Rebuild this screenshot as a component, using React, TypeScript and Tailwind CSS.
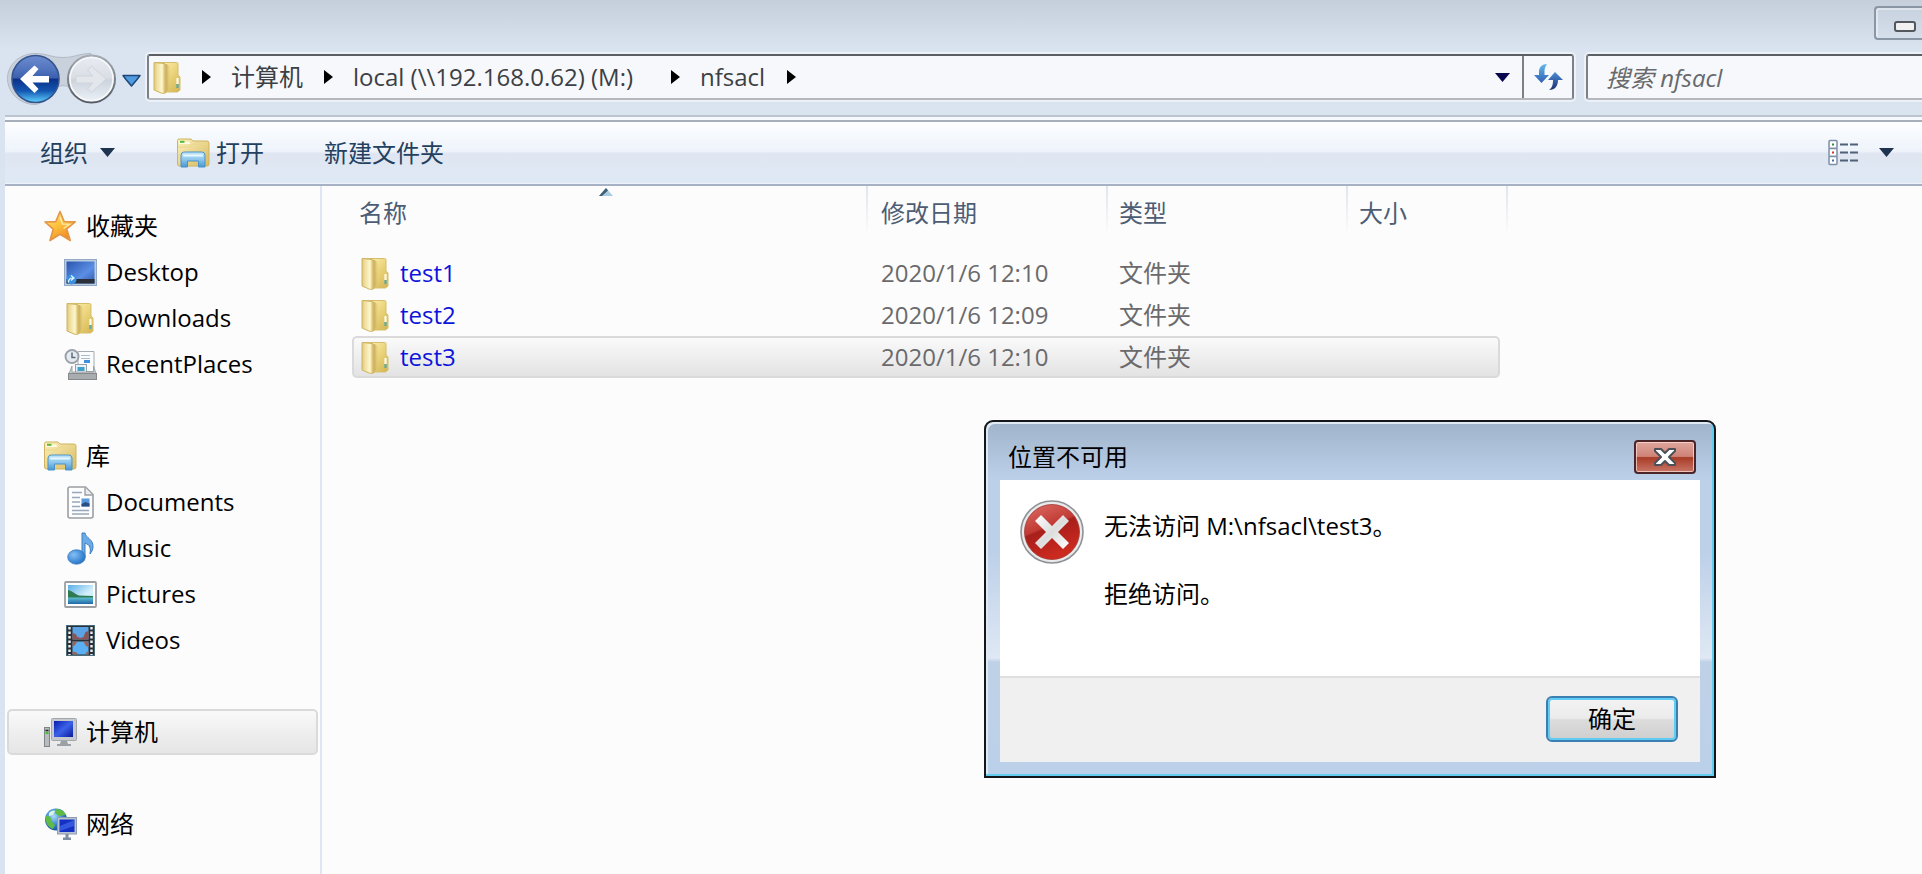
import React from "react";

type IconProps = { className?: string };

function FolderIcon({ className = "" }: IconProps) {
  return (
    <svg width="28" height="33" viewBox="0 0 28 33" className={`shrink-0 ${className}`} aria-hidden="true">
      <defs>
        <linearGradient id="fBack" x1="0" y1="0" x2="1" y2="1">
          <stop offset="0" stopColor="#fdf5c0" />
          <stop offset="0.450" stopColor="#efd985" />
          <stop offset="1" stopColor="#d3b550" />
        </linearGradient>
        <linearGradient id="fFront" x1="0" y1="0" x2="1" y2="0">
          <stop offset="0" stopColor="#e0c878" />
          <stop offset="0.250" stopColor="#f0dfa0" />
          <stop offset="0.650" stopColor="#fdf7cf" />
          <stop offset="0.800" stopColor="#e2cb80" />
          <stop offset="1" stopColor="#c9ab50" />
        </linearGradient>
        <linearGradient id="fShade" x1="0" y1="0" x2="1" y2="0">
          <stop offset="0" stopColor="#b3923c" />
          <stop offset="1" stopColor="#e3cb79" stopOpacity="0.200" />
        </linearGradient>
      </defs>
      <path d="M2 1.500h21.500a1.500 1.500 0 0 1 1.500 1.500v11l2 2v13l-2.500 2H11V2z" fill="url(#fBack)" stroke="#d6bd69" strokeWidth="1" />
      <path d="M12 3c3 0 5 2 5 4v20l-5 5z" fill="url(#fShade)" />
      <path d="M1 1.500l10 1c2 .5 2.500 2 2.500 4V31c-2 2-4 1.500-5.500 1L1 29z" fill="url(#fFront)" stroke="#ceb565" strokeWidth="1" />
      <path d="M24.500 17v6" stroke="#fffbe8" strokeWidth="2.200" />
      <path d="M24.500 23v4" stroke="#5aaaa8" strokeWidth="2.200" />
    </svg>
  );
}

function LibraryIcon({ className = "" }: IconProps) {
  return (
    <svg width="34" height="30" viewBox="0 0 34 30" className={`shrink-0 ${className}`} aria-hidden="true">
      <defs>
        <linearGradient id="lFold" x1="0" y1="0" x2="1" y2="1">
          <stop offset="0" stopColor="#fbf0bb" />
          <stop offset="1" stopColor="#d9bb60" />
        </linearGradient>
        <linearGradient id="lStand" x1="0" y1="0" x2="0" y2="1">
          <stop offset="0" stopColor="#c3e6f8" />
          <stop offset="0.5" stopColor="#8cc6ec" />
          <stop offset="1" stopColor="#4796cf" />
        </linearGradient>
      </defs>
      <path d="M1.500 5V2.500a1.500 1.500 0 0 1 1.500-1.500h12l2 2h14a2 2 0 0 1 2 2v21a2 2 0 0 1-2 2H3.500a2 2 0 0 1-2-2z" fill="url(#lFold)" stroke="#d0b45e" />
      <path d="M3 3.500h10l1.500 2.500H3z" fill="#fffbe2" />
      <path d="M4 2.800h4.500v2H4z" fill="#56b932" />
      <path d="M2 9h11l4-3h15" stroke="#e9d68d" fill="none" />
      <path d="M5 29V18c0-3 1-4 4-4h16c3 0 4 1 4 4v11h-6.500v-6h-11v6z" fill="url(#lStand)" stroke="#4a93c8" strokeWidth="1" strokeLinejoin="round" />
      <path d="M8 17.500h18" stroke="#e8f7ff" strokeWidth="2" strokeLinecap="round" />
    </svg>
  );
}

function StarIcon() {
  return (
    <svg width="33" height="32" viewBox="0 0 33 32" className="shrink-0" aria-hidden="true">
      <defs>
        <linearGradient id="star" x1="0" y1="0" x2="0.600" y2="1">
          <stop offset="0" stopColor="#ffe98c" />
          <stop offset="0.55" stopColor="#fdc03c" />
          <stop offset="1" stopColor="#f08a24" />
        </linearGradient>
      </defs>
      <path d="M16 1.500l4.200 10 11 .3-8.500 7.200 3.600 11.500L16 24.300 6 30.500l3.200-11.300L1 12l10.800-.4z" fill="url(#star)" stroke="#e39548" strokeWidth="1.600" strokeLinejoin="round" />
      <path d="M16 7l2.500 7 7 .3-6 4" stroke="#fff2b8" strokeWidth="1.500" fill="none" opacity=".8" />
    </svg>
  );
}

function DesktopIcon() {
  return (
    <svg width="33" height="27" viewBox="0 0 33 27" className="shrink-0" aria-hidden="true">
      <defs>
        <linearGradient id="desk" x1="0" y1="0" x2="1" y2="1">
          <stop offset="0" stopColor="#2c55ad" />
          <stop offset="0.600" stopColor="#5b8ee6" />
          <stop offset="1" stopColor="#3059a8" />
        </linearGradient>
      </defs>
      <rect x="0.500" y="0.500" width="32" height="26" fill="#b9cde2" stroke="#93a9c4" />
      <rect x="2.500" y="2.500" width="28" height="22" fill="url(#desk)" />
      <rect x="2.500" y="20" width="28" height="4.500" fill="#2b3138" />
      <circle cx="7.500" cy="20.500" r="5" fill="#3a8fe0" />
      <path d="M4.500 23.500c0-3 2-4.500 4.500-4.500M7 16.500l3 2.500-3 2.500" stroke="#e6f4ff" strokeWidth="1.200" fill="none" />
    </svg>
  );
}

function RecentIcon() {
  return (
    <svg width="33" height="31" viewBox="0 0 33 31" className="shrink-0" aria-hidden="true">
      <path d="M14 2.500h16v20H14z" fill="#fbfcfd" stroke="#a6abb0" />
      <path d="M17 6.500h9M17 9.500h9" stroke="#a9bccb" strokeWidth="1.200" />
      <path d="M20 11h6v3h-6z" fill="#3e8fdc" />
      <rect x="11.500" y="15.500" width="11" height="8" fill="#e9f2f8" stroke="#98a0a8" />
      <rect x="13.500" y="18" width="7" height="4" fill="#3f9fc8" />
      <path d="M8 17l-3.500 9h28l-3-9v6H8z" fill="#c9ccd0" stroke="#94989c" strokeWidth=".8" />
      <rect x="4.500" y="24.500" width="28" height="6" fill="#a9acaf" stroke="#86898c" />
      <circle cx="8" cy="7.500" r="6.500" fill="#e6ebef" stroke="#9aa1a9" strokeWidth="2" />
      <path d="M8 3.500v5h3.500" stroke="#5a6b7d" strokeWidth="1.500" fill="none" />
    </svg>
  );
}

function DocumentIcon() {
  return (
    <svg width="27" height="33" viewBox="0 0 27 33" className="shrink-0" aria-hidden="true">
      <path d="M3 1h15.500L26 8.500V30a2 2 0 0 1-2 2H3a2 2 0 0 1-2-2V3a2 2 0 0 1 2-2z" fill="#fdfdfe" stroke="#9b9ea3" strokeWidth="1.600" />
      <path d="M18 1.500v7.500h7.500" fill="#e9ebee" stroke="#9b9ea3" strokeWidth="1.400" />
      <path d="M5 6.500h10M5 11.500h8M5 16h8M5 20.500h8M5 24.500h17M5 28h17" stroke="#97a9bc" strokeWidth="1.300" />
      <rect x="14.500" y="12.500" width="8" height="8" fill="#5a98dc" />
      <path d="M14.500 18l4-2 4 1.500v3h-8z" fill="#2a4f86" />
    </svg>
  );
}

function MusicIcon() {
  return (
    <svg width="27" height="33" viewBox="0 0 27 33" className="shrink-0" aria-hidden="true">
      <defs>
        <radialGradient id="note" cx="0.350" cy="0.350" r="0.800">
          <stop offset="0" stopColor="#86bff2" />
          <stop offset="0.600" stopColor="#3f8bd8" />
          <stop offset="1" stopColor="#1f64b4" />
        </radialGradient>
      </defs>
      <path d="M15 1h3c.5 5 8.500 6 8 14-.2 3-1.500 5-3 7 1-6 0-9-5-11v14h-3z" fill="#6aaae6" stroke="#3c7fc4" strokeWidth="1" />
      <ellipse cx="9.500" cy="25" rx="8.800" ry="7.200" fill="url(#note)" stroke="#3377bd" strokeWidth=".8" />
    </svg>
  );
}

function PictureIcon() {
  return (
    <svg width="33" height="27" viewBox="0 0 33 27" className="shrink-0" aria-hidden="true">
      <defs>
        <linearGradient id="sky" x1="0" y1="0" x2="1" y2="1">
          <stop offset="0" stopColor="#58aee8" />
          <stop offset="0.600" stopColor="#d3effa" />
        </linearGradient>
        <linearGradient id="lake" x1="0" y1="0" x2="0" y2="1">
          <stop offset="0" stopColor="#5fc0d0" />
          <stop offset="1" stopColor="#1f67a8" />
        </linearGradient>
      </defs>
      <rect x="1" y="1" width="31" height="25" rx="1" fill="#fdfdfd" stroke="#9b9fa3" strokeWidth="1.800" />
      <rect x="4" y="4" width="25" height="19" fill="url(#sky)" />
      <path d="M4 9c4 1 7 4 11 5.500l14 .5v2H4z" fill="#2f7a52" />
      <path d="M4 16.500h25V23H4z" fill="url(#lake)" />
    </svg>
  );
}

function VideoIcon() {
  return (
    <svg width="29" height="31" viewBox="0 0 29 31" className="shrink-0" aria-hidden="true">
      <rect x="0.500" y="0.500" width="28" height="30" fill="#2b3036" stroke="#4b6c74" />
      <path d="M3.500 2v28M25.500 2v28" stroke="#eef1f3" strokeWidth="2.400" strokeDasharray="2.500 2" />
      <rect x="6.500" y="2" width="16" height="12.500" fill="#5aa4e6" />
      <path d="M6.500 14.500V8l3 1 2 3 3 1 3-1 2-5 3-1v8.500z" fill="#8d5551" />
      <rect x="6.500" y="16.500" width="16" height="13" fill="#5ab0f2" />
      <path d="M6.500 16.500h5l-3 4-2 1zM22.500 16.500h-5l2 4 3 2zM6.500 29.500v-3l4 1 2 2zM22.500 29.500v-4l-4 4z" fill="#9a6258" />
    </svg>
  );
}

function ComputerIcon() {
  return (
    <svg width="33" height="29" viewBox="0 0 33 29" className="shrink-0" aria-hidden="true">
      <defs>
        <linearGradient id="screen" x1="0" y1="0" x2="1" y2="1">
          <stop offset="0" stopColor="#0a1cae" />
          <stop offset="0.500" stopColor="#3c62e8" />
          <stop offset="1" stopColor="#0a1a9c" />
        </linearGradient>
      </defs>
      <rect x="0.500" y="9.500" width="5" height="19" fill="#b9bcbf" stroke="#7f8488" />
      <path d="M1.500 12.500h3" stroke="#222" strokeWidth="1.500" />
      <path d="M1.500 15h3" stroke="#3ec62c" strokeWidth="2" />
      <rect x="7.500" y="0.500" width="25" height="22" rx="1" fill="#c6cacf" stroke="#a2a7ac" />
      <rect x="10" y="3" width="19" height="16" fill="url(#screen)" />
      <path d="M17 23h6l1 3h3v2H13v-2h3z" fill="#9ba0a5" />
    </svg>
  );
}

function NetworkIcon() {
  return (
    <svg width="33" height="33" viewBox="0 0 33 33" className="shrink-0" aria-hidden="true">
      <defs>
        <radialGradient id="globe" cx="0.400" cy="0.350" r="0.750">
          <stop offset="0" stopColor="#a8dcf7" />
          <stop offset="0.550" stopColor="#3380cc" />
          <stop offset="1" stopColor="#123f86" />
        </radialGradient>
      </defs>
      <circle cx="12" cy="11.500" r="11" fill="url(#globe)" />
      <path d="M2 8c4 0 6 2 5 5l4 4-2 4C4 19 1 15 2 8zM12 1c5 0 8 2 10 6l-7 1-4-3z" fill="#5fbb45" />
      <path d="M5 5c2-2 4-3 6-2l-2 4-4 1z" fill="#d8f4e4" />
      <rect x="13.500" y="9.500" width="19" height="16.500" fill="#b9c2d2" stroke="#8f9bb0" />
      <rect x="15.500" y="11.500" width="15" height="12.500" fill="#1530c4" />
      <path d="M16 18l14-6v6l-14 5z" fill="#4169e8" opacity=".7" />
      <path d="M21.500 26h3v3.500h2.500v2.500h-8v-2.500h2.500z" fill="#7d8ea3" />
    </svg>
  );
}

function NavButtons() {
  return (
    <div className="relative h-[45px] w-[147px] shrink-0">
      <svg width="147" height="60" viewBox="0 46 147 60" className="absolute -top-2 left-0" aria-hidden="true">
        <defs>
          <linearGradient id="backTop" x1="0" y1="0" x2="0" y2="1">
            <stop offset="0" stopColor="#6d8cd0" />
            <stop offset="0.300" stopColor="#5174be" />
            <stop offset="0.480" stopColor="#3b5fae" />
            <stop offset="0.500" stopColor="#0b3187" />
            <stop offset="0.750" stopColor="#1255b0" />
            <stop offset="1" stopColor="#5fd4ff" />
          </linearGradient>
          <linearGradient id="fwd" x1="0" y1="0" x2="0" y2="1">
            <stop offset="0" stopColor="#e9edf2" />
            <stop offset="0.480" stopColor="#d9dee5" />
            <stop offset="0.520" stopColor="#cbd3dd" />
            <stop offset="1" stopColor="#eef3f8" />
          </linearGradient>
          <linearGradient id="ring" x1="0" y1="0" x2="0" y2="1">
            <stop offset="0" stopColor="#a6abb2" />
            <stop offset="1" stopColor="#555b63" />
          </linearGradient>
        </defs>
        <path d="M35 53.500c12 0 16 4 28 4s16-4 28-4v48c-10 0-16-16-28-16s-16 19-28 19c-15 0-27.500-12-27.500-26S20 53.500 35 53.500z" fill="#c6cdd8" stroke="#a8b0bb" strokeWidth="1" opacity=".8" />
        <circle cx="35.500" cy="79" r="23.500" fill="url(#backTop)" stroke="#36558f" strokeWidth="1.600" />
        <path d="M20 79l14.500-13.500 4 3.500-6 7H49v6.500H32.500l6 6.500-4 4z" fill="#ffffff" />
        <circle cx="91.500" cy="79" r="23.500" fill="url(#fwd)" stroke="url(#ring)" strokeWidth="2" />
        <circle cx="91.500" cy="79" r="21.500" fill="none" stroke="#f7f9fb" strokeWidth="1.500" />
        <path d="M106 79L91.500 92.500l-4-3.500 5-6H76v-7h16.500l-5-6 4-4z" fill="#e3e6eb" stroke="#cfd5dc" strokeWidth="1" />
        <path d="M123 75.500h17l-3 4-5.500 6.500-5.500-6.500z" fill="#4f9de0" stroke="#1f4677" strokeWidth="1.500" strokeLinejoin="round" />
      </svg>
      <button type="button" aria-label="后退" className="absolute top-0 left-3 h-12 w-12 rounded-full" />
      <button type="button" aria-label="前进" className="absolute top-0 left-17 h-12 w-12 rounded-full" />
      <button type="button" aria-label="最近的页面" className="absolute top-3 left-30 h-6 w-5" />
    </div>
  );
}

function Chevron() {
  return (
    <svg width="9" height="14" viewBox="0 0 9 14" className="shrink-0" aria-hidden="true">
      <path d="M0 0l9 7-9 7z" fill="#000" />
    </svg>
  );
}

function DownTriangle({ className = "" }: IconProps) {
  return (
    <svg width="15" height="9" viewBox="0 0 15 9" className={`shrink-0 ${className}`} aria-hidden="true">
      <path d="M0 0h15L7.500 9z" fill="currentColor" />
    </svg>
  );
}

function AddressBar() {
  return (
    <div className="flex h-[46px] min-w-0 flex-1 items-stretch rounded-[3px] border-2 border-t-[#5c5f63] border-r-[#7d8186] border-b-[#b4b8be] border-l-[#7d8186] bg-[#f7f8fb] shadow-[0_0_0_2px_rgba(255,255,255,0.5)]">
      <nav aria-label="地址" className="flex min-w-0 flex-1 items-center pl-1 text-[#3c3f44]">
        <FolderIcon />
        <span className="ml-[21px] flex"><Chevron /></span>
        <a href="#computer" className="ml-5 w-[93px] whitespace-nowrap">计算机</a>
        <Chevron />
        <a href="#local" className="ml-5 w-[318px] whitespace-nowrap">local (\\192.168.0.62) (M:)</a>
        <Chevron />
        <a href="#nfsacl" className="ml-5 w-[87px] whitespace-nowrap">nfsacl</a>
        <Chevron />
      </nav>
      <button type="button" aria-label="以前的位置" className="flex w-[27px] items-center text-[#08084f]">
        <DownTriangle />
      </button>
      <button type="button" aria-label="刷新" className="flex w-[50px] items-center justify-center border-l-2 border-[#7d8186]">
        <svg width="30" height="28" viewBox="0 0 30 28" aria-hidden="true">
          <defs>
            <linearGradient id="rf" x1="0" y1="0" x2="0" y2="1">
              <stop offset="0" stopColor="#63b8ea" />
              <stop offset="1" stopColor="#2f5eb0" />
            </linearGradient>
            <linearGradient id="rf2" x1="0" y1="0" x2="0" y2="1">
              <stop offset="0" stopColor="#4a8fdc" />
              <stop offset="1" stopColor="#1d2f6e" />
            </linearGradient>
          </defs>
          <path d="M14 1c-5 0-8 3-8 8v3H1l7.500 8 7.500-8h-4.500V8c0-2 .5-4 2.500-7z" fill="url(#rf)" />
          <path d="M22 9l8 8h-5c0 6-3 10-9 10 3-2 4-5 4-10h-5z" fill="url(#rf2)" />
        </svg>
      </button>
    </div>
  );
}

function Toolbar() {
  return (
    <div className="flex h-[62px] items-center border-b border-[#eef2f9] bg-[linear-gradient(#fdfeff_0%,#eef3fb_48%,#dfe6f1_52%,#dfe9f6_100%)] pr-7 pl-[35px] text-[#24405f]">
      <button type="button" className="flex items-center gap-3">
        组织
        <DownTriangle className="text-[#1e3350]" />
      </button>
      <button type="button" className="ml-[61px] flex items-center gap-1.5">
        <LibraryIcon />
        打开
      </button>
      <button type="button" className="ml-[60px]">新建文件夹</button>
      <button type="button" aria-label="更改视图" className="ml-auto">
        <svg width="31" height="28" viewBox="0 0 31 28" aria-hidden="true">
          {[1, 9, 17].map((y) => (
            <rect key={y} x="1" y={y + 0.5} width="8" height="8" rx="1" fill="#fff" stroke="#7d8ea6" strokeWidth="1.500" />
          ))}
          <path d="M4 5.500h2" stroke="#3e8a3a" strokeWidth="2" />
          <path d="M4 13.500h2" stroke="#d8352a" strokeWidth="2" />
          <path d="M4 21.500h2" stroke="#3c6fb4" strokeWidth="2" />
          <path d="M12 5.500h8M22 5.500h8M12 13.500h8M22 13.500h8M12 21.500h8M22 21.500h8" stroke="#4f6178" strokeWidth="2" />
        </svg>
      </button>
      <button type="button" aria-label="更多选项" className="ml-5 flex text-[#1e3350]">
        <DownTriangle />
      </button>
    </div>
  );
}

type SideItem = { label: string; icon: React.ReactNode; child?: boolean; selected?: boolean };

const sideGroups: SideItem[][] = [
  [
    { label: "收藏夹", icon: <StarIcon /> },
    { label: "Desktop", icon: <DesktopIcon />, child: true },
    { label: "Downloads", icon: <FolderIcon />, child: true },
    { label: "RecentPlaces", icon: <RecentIcon />, child: true },
  ],
  [
    { label: "库", icon: <LibraryIcon /> },
    { label: "Documents", icon: <DocumentIcon />, child: true },
    { label: "Music", icon: <MusicIcon />, child: true },
    { label: "Pictures", icon: <PictureIcon />, child: true },
    { label: "Videos", icon: <VideoIcon />, child: true },
  ],
  [{ label: "计算机", icon: <ComputerIcon />, selected: true }],
  [{ label: "网络", icon: <NetworkIcon /> }],
];

function Sidebar() {
  return (
    <nav aria-label="导航窗格" className="flex w-[317px] shrink-0 flex-col gap-[46px] border-r-2 border-[#dfe5f2] pt-[17px] pr-0.5 pl-0.5 text-black">
      {sideGroups.map((group) => (
        <ul key={group[0].label}>
          {group.map((item) => (
            <li key={item.label}>
              <a
                href={`#${item.label}`}
                className={`flex h-[46px] items-center gap-[9px] rounded-[5px] border-2 ${item.child ? "pl-[54px]" : "pl-[34px]"} ${
                  item.selected ? "border-[#dadada] bg-[linear-gradient(#f9f9f9,#e5e5e5)]" : "border-transparent"
                }`}
              >
                <span className="flex w-[34px] shrink-0 justify-center">{item.icon}</span>
                {item.label}
              </a>
            </li>
          ))}
        </ul>
      ))}
    </nav>
  );
}

const files = [
  { name: "test1", date: "2020/1/6 12:10", type: "文件夹" },
  { name: "test2", date: "2020/1/6 12:09", type: "文件夹" },
  { name: "test3", date: "2020/1/6 12:10", type: "文件夹", selected: true },
];

function FileList() {
  const divider = "bg-[linear-gradient(#dfe4ee,#fcfcfc)] bg-[length:2px_50px] bg-right-top bg-no-repeat";
  const cell = "border-y-2 border-[#dadada] bg-[linear-gradient(#fafafb,#e3e3e4)]";
  return (
    <main className="min-w-0 flex-1 pl-[30px]">
      <table className="w-[1156px] table-fixed border-separate border-spacing-0 text-left">
        <colgroup>
          <col className="w-[516px]" />
          <col className="w-[240px]" />
          <col className="w-[240px]" />
          <col className="w-[152px]" />
          <col className="w-[8px]" />
        </colgroup>
        <thead>
          <tr className="h-[66px] align-top text-[#4c5d75]">
            <th className={`relative pt-[9px] pl-[7px] font-normal ${divider}`}>
              名称
              <svg width="14" height="8" viewBox="0 0 14 8" className="absolute top-0.5 left-[247px]" aria-hidden="true">
                <path d="M0 8l7-8 7 8z" fill="#a9cbe0" />
                <path d="M0 8l7-8 2 2.500L3 8z" fill="#3f5f78" />
              </svg>
            </th>
            <th className={`pt-[9px] pl-[13px] font-normal ${divider}`}>修改日期</th>
            <th className={`pt-[9px] pl-[11px] font-normal ${divider}`}>类型</th>
            <th colSpan={2} className={`pt-[9px] pl-[11px] font-normal ${divider}`}>大小</th>
          </tr>
        </thead>
        <tbody>
          {files.map((f) => {
            const base = f.selected ? cell : "border-y-2 border-transparent";
            return (
              <tr key={f.name} className="h-[42px] text-[#6a6a6c]">
                <td className={`p-0 ${base} ${f.selected ? "rounded-l-[5px] border-l-2" : "border-l-2"}`}>
                  <a href={`#${f.name}`} className="flex h-[38px] items-center gap-[11px] pl-[7px] text-[#0c14dc]">
                    <FolderIcon />
                    {f.name}
                  </a>
                </td>
                <td className={`p-0 pl-[13px] ${base}`}>{f.date}</td>
                <td className={`p-0 pl-[11px] ${base}`}>{f.type}</td>
                <td className={`p-0 ${base} ${f.selected ? "rounded-r-[5px] border-r-2" : ""}`} />
                <td className="p-0" />
              </tr>
            );
          })}
        </tbody>
      </table>
    </main>
  );
}

function ErrorDialog() {
  return (
    <div
      role="alertdialog"
      aria-labelledby="dialog-title"
      aria-describedby="dialog-text"
      className="absolute top-[420px] left-[984px] w-[732px] rounded-t-[9px] border-2 border-[#15181b] bg-[linear-gradient(#9fb3cb_0px,#bdd0e9_58px,#bdd0e9_130px,#dfe8f4_236px,#bfd1e6_240px,#bbd0ea_100%)] shadow-[inset_-2px_-2px_0_#62cdee,inset_2px_2px_0_#dfeaf5] text-black"
    >
      <div className="flex h-[58px] items-center justify-between pt-3 pr-[18px] pl-[22px]">
        <h2 id="dialog-title">位置不可用</h2>
        <button
          type="button"
          aria-label="关闭"
          className="flex h-[34px] w-[62px] items-center justify-center rounded-[4px] border-2 border-[#4c2529] bg-[linear-gradient(#dfa69d_0%,#cf8377_48%,#a83c28_52%,#c97566_100%)] shadow-[inset_0_0_0_1px_rgba(255,225,220,0.7)]"
        >
          <svg width="24" height="20" viewBox="0 0 24 20" aria-hidden="true">
            <path d="M2 2h6l4 4 4-4h6v2l-6 6 6 6v2h-6l-4-4-4 4H2v-2l6-6-6-6z" fill="#fff" stroke="#4d5058" strokeWidth="2" strokeLinejoin="round" />
          </svg>
        </button>
      </div>
      <div className="mx-3.5 mb-3.5">
        <div id="dialog-text" className="flex h-[196px] bg-white pt-5 pl-5">
          <svg width="64" height="64" viewBox="0 0 64 64" className="mr-5 shrink-0" aria-hidden="true">
            <defs>
              <linearGradient id="err" x1="0" y1="0" x2="0.400" y2="1">
                <stop offset="0" stopColor="#dc7068" />
                <stop offset="0.480" stopColor="#c23a34" />
                <stop offset="0.520" stopColor="#a81f1b" />
                <stop offset="1" stopColor="#cc2a1e" />
              </linearGradient>
              <linearGradient id="errX" x1="0" y1="0" x2="1" y2="1">
                <stop offset="0" stopColor="#ffffff" />
                <stop offset="0.500" stopColor="#dcdcdc" />
                <stop offset="1" stopColor="#ffffff" />
              </linearGradient>
            </defs>
            <circle cx="32" cy="32" r="31" fill="#e9eaeb" stroke="#8f9295" strokeWidth="1.600" />
            <circle cx="32" cy="32" r="27.500" fill="url(#err)" stroke="#a13a35" strokeWidth=".8" />
            <path d="M21 15l11 11 11-11 6 6-11 11 11 11-6 6-11-11-11 11-6-6 11-11-11-11z" fill="url(#errX)" />
          </svg>
          <div className="space-y-8 pt-2">
            <p>无法访问 M:\nfsacl\test3。</p>
            <p>拒绝访问。</p>
          </div>
        </div>
        <div className="flex h-[86px] justify-end border-t-2 border-[#dfdfdf] bg-[#f0f0f0] pt-[18px] pr-[22px]">
          <button
            type="button"
            className="h-[46px] w-[132px] rounded-[6px] border-2 border-[#3c7fb1] bg-[linear-gradient(#f3f3f3_0%,#ebebeb_48%,#dcdcdc_52%,#cecece_100%)] shadow-[inset_0_0_0_2px_#5fcdf3]"
          >
            确定
          </button>
        </div>
      </div>
    </div>
  );
}

export default function App() {
  return (
    <div className="relative flex min-h-screen flex-col overflow-hidden bg-[#dae4f0] font-['Open_Sans','Noto_Sans_CJK_SC',sans-serif] text-[24px] leading-[36px]">
      <header className="bg-[linear-gradient(#c5cfdb_0px,#dae4f0_50px)] pb-[15px]">
        <div className="flex h-[54px] justify-end pt-1.5">
          <button
            type="button"
            aria-label="最小化"
            className="flex h-[34px] w-12 items-end rounded-l-[4px] border-2 border-r-0 border-[#8b96a5] pb-1.5 pl-[18px] shadow-[inset_1px_1px_0_1px_rgba(255,255,255,0.4)]"
          >
            <span className="h-[11px] w-[22px] rounded-[3px] border-2 border-[#53575e] bg-[#f1f1f1]" />
          </button>
        </div>
        <div className="flex">
          <NavButtons />
          <AddressBar />
          <input
            type="search"
            aria-label="搜索 nfsacl"
            placeholder="搜索 nfsacl"
            className="ml-3 h-[46px] w-[336px] rounded-l-[3px] border-2 border-r-0 border-t-[#5c5f63] border-b-[#b4b8be] border-l-[#7d8186] bg-[#f7f8fb] pl-[18px] italic shadow-[0_0_0_2px_rgba(255,255,255,0.5)] placeholder:text-[#68696c] placeholder:opacity-100"
          />
        </div>
      </header>
      <div className="ml-[5px] flex flex-1 flex-col border-t-2 border-[#bcc4cf] bg-[#fcfcfc]">
        <div className="h-[5px] border-b-2 border-[#a9afba] bg-[#f6f9fd]" />
        <Toolbar />
        <div className="flex flex-1 border-t-2 border-[#a6b1c3]">
          <Sidebar />
          <FileList />
        </div>
      </div>
      <ErrorDialog />
    </div>
  );
}
